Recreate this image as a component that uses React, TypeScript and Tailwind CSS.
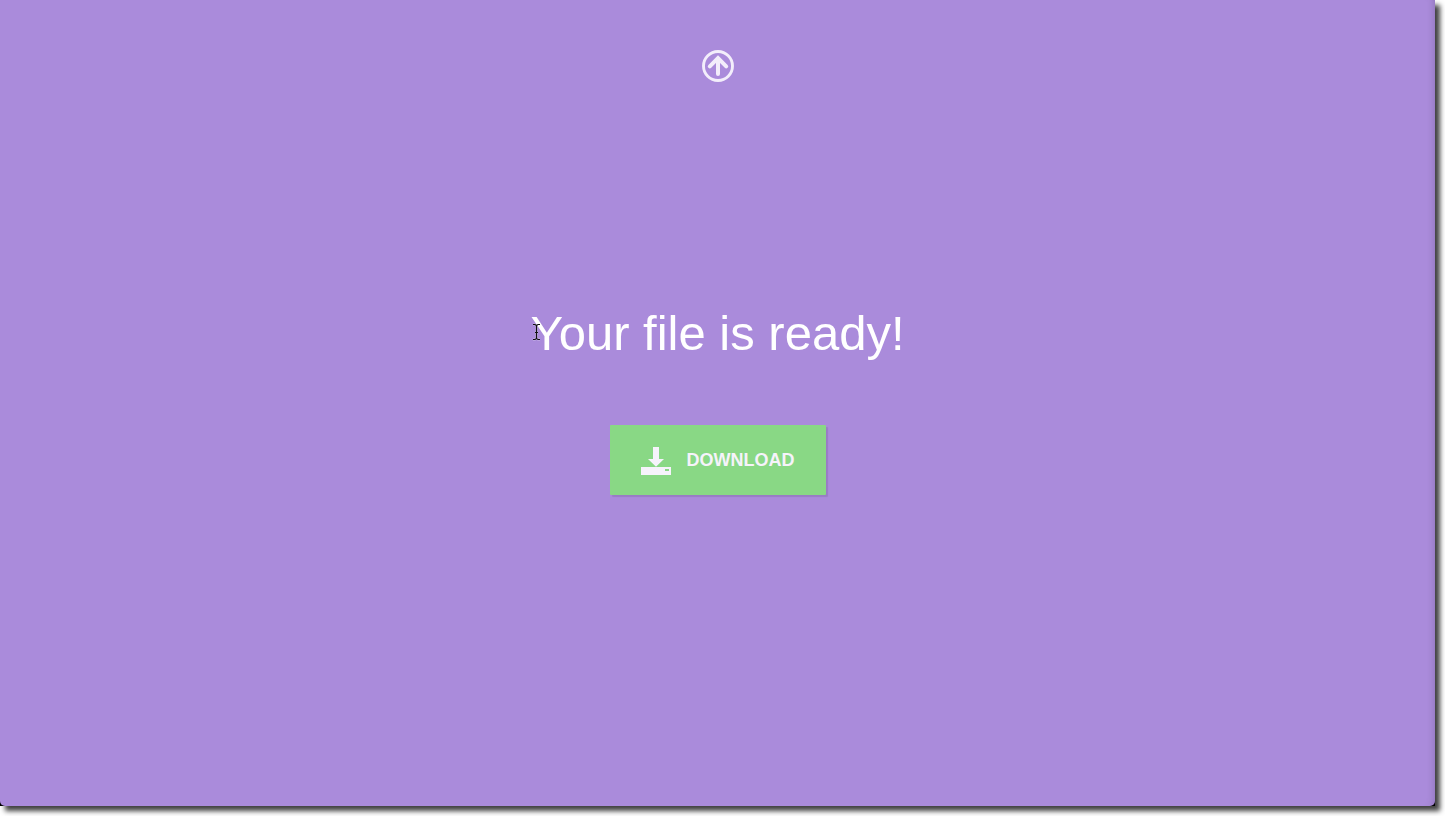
function UpIcon() {
  return (
    <svg viewBox="0 0 32 32" className="block size-8" fill="none" stroke="currentColor" aria-hidden="true">
      <circle cx="16" cy="16" r="14.5" strokeWidth="2.9" />
      <path d="M16 24V9.5M7.8 16.4 16 8.2l8.2 8.2" strokeWidth="4" strokeLinecap="round" strokeLinejoin="miter" />
    </svg>
  );
}

function DriveIcon() {
  return (
    <svg viewBox="0 0 30 30" className="size-[30px] shrink-0" fill="currentColor" aria-hidden="true">
      <path d="M12 2h6v12h5l-8 7.8L7 14h5z" />
      <path fillRule="evenodd" d="M0 22h30v8H0zM24 24v2h4v-2z" />
    </svg>
  );
}

function TextCursor() {
  return (
    <svg viewBox="0 0 9 18" className="absolute top-5 left-0.5 h-[18px] w-[9px]" fill="none" aria-hidden="true">
      <path d="M1 1.5h2l1.5 1L6 1.5h2M4.5 2v14M1 16.5h2l1.5-1 1.5 1h2M3 9.5h3" stroke="#ffffff" strokeOpacity="0.4" strokeWidth="2" />
      <path d="M1 1.5h2l1.5 1L6 1.5h2M4.5 2v14M1 16.5h2l1.5-1 1.5 1h2M3 9.5h3" stroke="#111111" strokeWidth="1.2" />
    </svg>
  );
}

export default function App() {
  return (
    <div className="flex min-h-screen bg-white pr-2.5 pb-2.5 font-['Liberation_Sans',Arial,sans-serif]">
      <div className="flex grow bg-black shadow-[5px_5px_5px_rgba(0,0,0,0.75)]">
        <main className="flex grow flex-col items-center rounded-b-[5px] bg-[#aa8bdb] px-4 pt-[50px] pb-12 shadow-[inset_-8px_0_8px_-8px_rgba(0,0,0,0.2)]">
          <button type="button" aria-label="Back to top" className="text-[#f3eefb]">
            <UpIcon />
          </button>
          <h1 className="relative mt-[221px] text-center text-[49px] leading-[60px] text-white">
            <TextCursor />
            Your file is ready!
          </h1>
          <button
            type="button"
            className="mt-[62px] flex h-[70px] w-[216px] items-center justify-center gap-4 rounded-[1px] bg-[#89d885] text-lg font-bold text-[#f6f3fb] shadow-[2px_2px_1px_rgba(0,0,0,0.1)]"
          >
            <DriveIcon />
            <span>DOWNLOAD</span>
          </button>
        </main>
      </div>
    </div>
  );
}
